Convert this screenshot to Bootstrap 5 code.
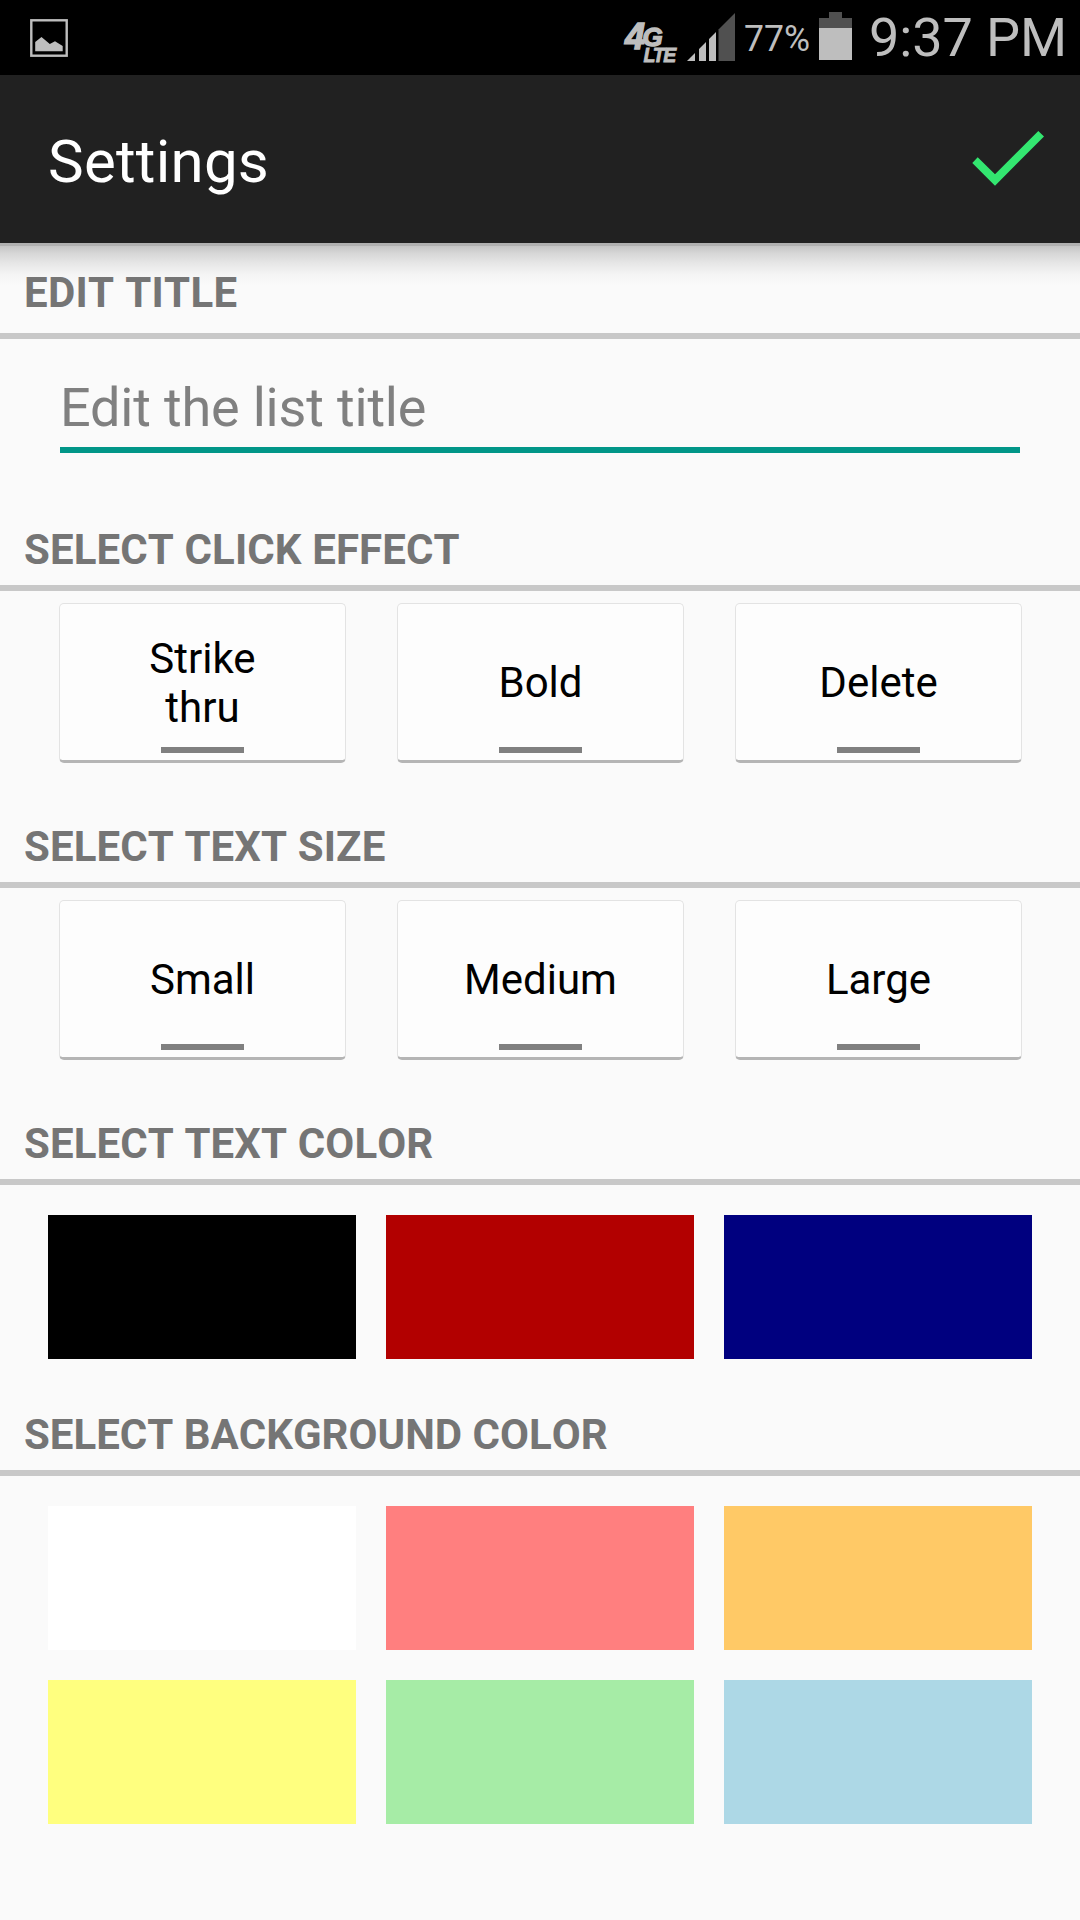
<!DOCTYPE html>
<html lang="en">
<head>
<meta charset="utf-8">
<meta name="viewport" content="width=device-width, initial-scale=1">
<title>Settings</title>
<link href="https://cdn.jsdelivr.net/npm/bootstrap@5.3.0/dist/css/bootstrap.min.css" rel="stylesheet">
<style>
body{font-family:Roboto,"Liberation Sans",sans-serif;background:#fafafa;color:#000;height:1920px;overflow:hidden}
.status-bar{height:75px;background:#000;color:#bebebe;padding:0 13px 0 30px}
.clock{font-size:54px;line-height:64px;margin-left:17px;letter-spacing:-.1px}
.app-bar{height:168px;background:#212121;padding:0 36px 0 48px}
.app-title{font-size:60px;line-height:70px;font-weight:400;color:#fff;letter-spacing:.25px;padding-top:5px}
.top-shadow{background:linear-gradient(#b0b0b0 0 3px,#c4c4c4 3px,#d6d6d6 10px,#e6e6e6 20px,#f4f4f4 31px,#fafafa 42px)}
.group-title{font-size:42px;line-height:50px;font-weight:700;font-kerning:none;letter-spacing:.1px;color:#757575;padding:0 24px 10px;border-bottom:6px solid #c8c8c8}
.group-title.first-title{padding-top:25px;padding-bottom:15px;letter-spacing:.3px}
.group-title.long-title{letter-spacing:0}
.title-input{height:114px;margin:0 60px 66px;width:960px;padding:29px 0 0;border:0;border-bottom:6px solid #009688;border-radius:0;background:transparent!important;font-size:54px;line-height:64px;letter-spacing:-.18px;box-shadow:none!important}
.title-block{padding-bottom:6px}
.title-input::placeholder{color:#808080;opacity:1}
.choices{gap:51px;padding:12px 58px 59px 59px}
.choice{flex:1 1 0;min-width:0;height:160px;font-size:42px;line-height:49px;color:#000;background:#fdfdfd;border:1px solid #e3e3e3;border-bottom:3px solid #b5b5b5;border-radius:5px;padding:14px 0 0;--bs-btn-hover-bg:#fdfdfd}
.choice::after{content:"";width:83px;height:6px;background:#808080;flex:none;margin-bottom:7px}
.swatches{display:grid;grid-template-columns:repeat(3,308px);gap:30px;padding:30px 48px 51px}
.swatch{height:144px;border:0;padding:0}
</style>
</head>
<body>
<header>
  <div class="status-bar d-flex align-items-center">
    <svg width="38" height="38" viewBox="30 19 38 38" class="me-auto"><rect x="31.3" y="20.3" width="35.4" height="35.4" fill="none" stroke="#bebebe" stroke-width="2.4"/><path d="M35.2 42 41.5 37 49.8 44 55 41.3 62.7 46V51.2H35.2Z" fill="#bebebe"/></svg>
    <svg width="230" height="75" viewBox="622 0 230 75">
      <text fill="#bebebe" stroke="#bebebe" font-family="Liberation Sans, sans-serif" font-weight="700" font-style="italic"><tspan x="625" y="48.5" font-size="36" stroke-width="1.4">4</tspan><tspan x="642.5" y="45.5" font-size="26" stroke-width="1.4">G</tspan><tspan x="643.5" y="62" font-size="19.5" stroke-width=".8" letter-spacing="-1.3">LTE</tspan></text>
      <path d="M687 61 695 53V61ZM699 61V49L706 42V61ZM709 61V39L716 32V61Z" fill="#bebebe"/>
      <path d="M718.5 61V29.5L735 13V61Z" fill="#505050"/>
      <text x="744" y="51" font-size="36" fill="#bebebe" font-family="Roboto, sans-serif" textLength="66" lengthAdjust="spacingAndGlyphs">77%</text>
      <path d="M829 12H842V18H852V28H819V18H829Z" fill="#505050"/><path d="M819 28H852V60H819Z" fill="#bebebe"/>
    </svg>
    <span class="clock">9:37 PM</span>
  </div>
  <nav class="app-bar d-flex align-items-center justify-content-between">
    <h1 class="app-title m-0">Settings</h1>
    <svg width="72" height="56" viewBox="972 131 72 56" role="button" aria-label="Save"><path d="M972.3 163 977.7 157.3 995 174.3 1038.3 131 1044 136.5 995 185.7Z" fill="#33e670"/></svg>
  </nav>
</header>
<main>
  <section class="top-shadow">
    <h2 class="group-title first-title m-0">EDIT TITLE</h2>
  </section>
  <div class="title-block"><input class="form-control title-input" type="text" placeholder="Edit the list title"></div>
  <section>
    <h2 class="group-title m-0">SELECT CLICK EFFECT</h2>
    <div class="choices d-flex">
      <button class="btn choice d-flex flex-column align-items-center"><span class="my-auto">Strike<br>thru</span></button>
      <button class="btn choice d-flex flex-column align-items-center"><span class="my-auto">Bold</span></button>
      <button class="btn choice d-flex flex-column align-items-center"><span class="my-auto">Delete</span></button>
    </div>
  </section>
  <section>
    <h2 class="group-title m-0">SELECT TEXT SIZE</h2>
    <div class="choices d-flex">
      <button class="btn choice d-flex flex-column align-items-center"><span class="my-auto">Small</span></button>
      <button class="btn choice d-flex flex-column align-items-center"><span class="my-auto">Medium</span></button>
      <button class="btn choice d-flex flex-column align-items-center"><span class="my-auto">Large</span></button>
    </div>
  </section>
  <section>
    <h2 class="group-title m-0">SELECT TEXT COLOR</h2>
    <div class="swatches">
      <button class="swatch" style="background:#000" aria-label="Black"></button>
      <button class="swatch" style="background:#b20000" aria-label="Red"></button>
      <button class="swatch" style="background:#00007f" aria-label="Navy"></button>
    </div>
  </section>
  <section>
    <h2 class="group-title long-title m-0">SELECT BACKGROUND COLOR</h2>
    <div class="swatches">
      <button class="swatch" style="background:#fff" aria-label="White"></button>
      <button class="swatch" style="background:#ff7f7f" aria-label="Pink"></button>
      <button class="swatch" style="background:#ffc966" aria-label="Orange"></button>
      <button class="swatch" style="background:#ffff7f" aria-label="Yellow"></button>
      <button class="swatch" style="background:#a6eca6" aria-label="Green"></button>
      <button class="swatch" style="background:#add8e6" aria-label="Blue"></button>
    </div>
  </section>
</main>
<script src="https://cdn.jsdelivr.net/npm/bootstrap@5.3.0/dist/js/bootstrap.bundle.min.js"></script>
</body>
</html>
